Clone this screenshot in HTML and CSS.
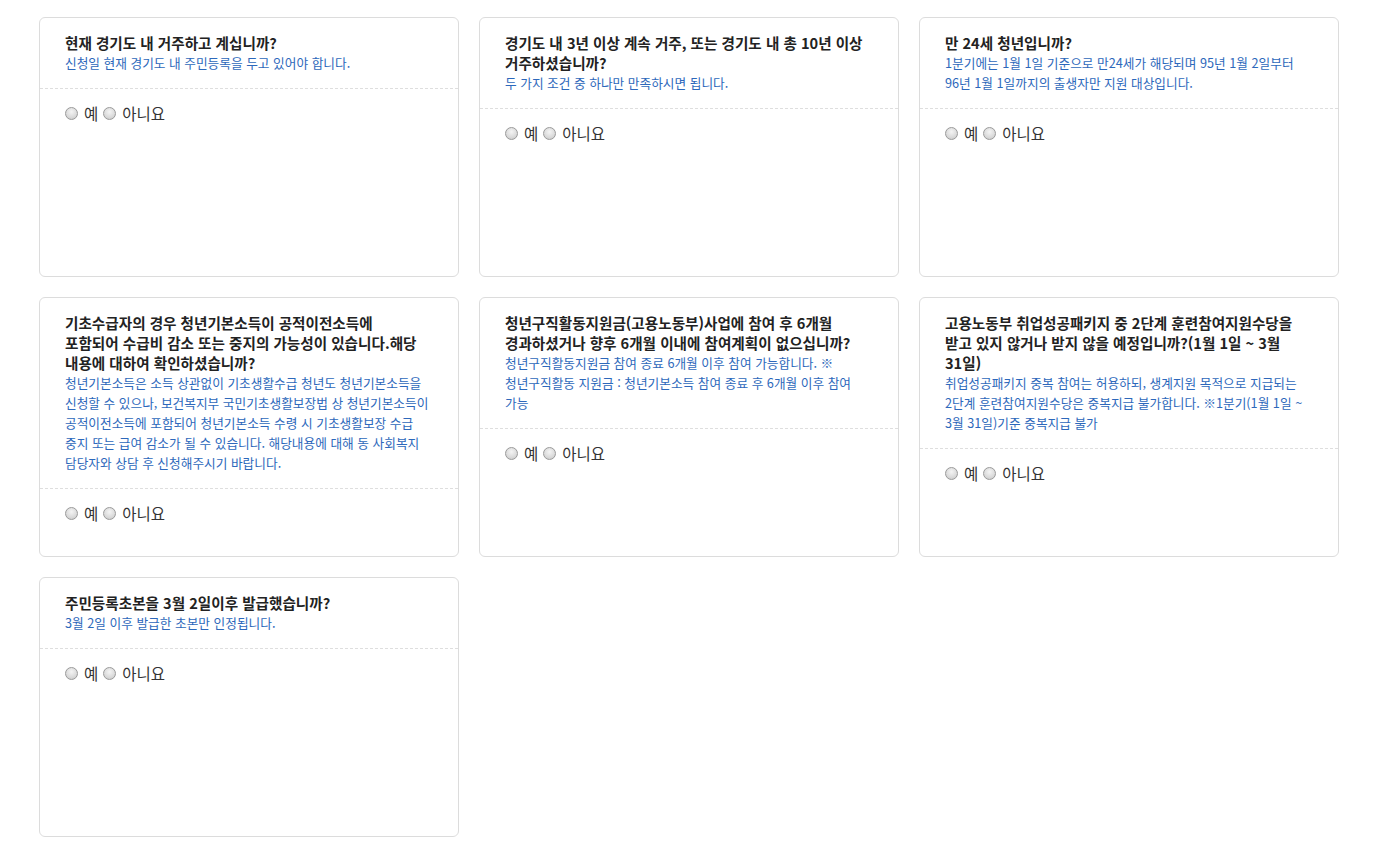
FILE: index.html
```html
<!DOCTYPE html>
<html lang="ko">
<head>
<meta charset="utf-8">
<link rel="stylesheet" href="styles.css">
</head>
<body>
<div class="grid">
  <div class="card">
    <div class="head">
      <div class="q">현재 경기도 내 거주하고 계십니까?</div>
      <div class="desc">신청일 현재 경기도 내 주민등록을 두고 있어야 합니다.</div>
    </div>
    <div class="opts"><label><input type="radio" name="q1"> 예</label><label><input type="radio" name="q1"> 아니요</label></div>
  </div>
  <div class="card">
    <div class="head">
      <div class="q">경기도 내 3년 이상 계속 거주, 또는 경기도 내 총 10년 이상 거주하셨습니까?</div>
      <div class="desc">두 가지 조건 중 하나만 만족하시면 됩니다.</div>
    </div>
    <div class="opts"><label><input type="radio" name="q2"> 예</label><label><input type="radio" name="q2"> 아니요</label></div>
  </div>
  <div class="card">
    <div class="head">
      <div class="q">만 24세 청년입니까?</div>
      <div class="desc">1분기에는 1월 1일 기준으로 만24세가 해당되며 95년 1월 2일부터 96년 1월 1일까지의 출생자만 지원 대상입니다.</div>
    </div>
    <div class="opts"><label><input type="radio" name="q3"> 예</label><label><input type="radio" name="q3"> 아니요</label></div>
  </div>
  <div class="card">
    <div class="head">
      <div class="q">기초수급자의 경우 청년기본소득이 공적이전소득에 포함되어 수급비 감소 또는 중지의 가능성이 있습니다.해당 내용에 대하여 확인하셨습니까?</div>
      <div class="desc">청년기본소득은 소득 상관없이 기초생활수급 청년도 청년기본소득을 신청할 수 있으나, 보건복지부 국민기초생활보장법 상 청년기본소득이 공적이전소득에 포함되어 청년기본소득 수령 시 기초생활보장 수급 중지 또는 급여 감소가 될 수 있습니다. 해당내용에 대해 동 사회복지 담당자와 상담 후 신청해주시기 바랍니다.</div>
    </div>
    <div class="opts"><label><input type="radio" name="q4"> 예</label><label><input type="radio" name="q4"> 아니요</label></div>
  </div>
  <div class="card">
    <div class="head">
      <div class="q">청년구직활동지원금(고용노동부)사업에 참여 후 6개월 경과하셨거나 향후 6개월 이내에 참여계획이 없으십니까?</div>
      <div class="desc">청년구직활동지원금 참여 종료 6개월 이후 참여 가능합니다. ※ 청년구직활동 지원금 : 청년기본소득 참여 종료 후 6개월 이후 참여 가능</div>
    </div>
    <div class="opts"><label><input type="radio" name="q5"> 예</label><label><input type="radio" name="q5"> 아니요</label></div>
  </div>
  <div class="card">
    <div class="head">
      <div class="q">고용노동부 취업성공패키지 중 2단계 훈련참여지원수당을 받고 있지 않거나 받지 않을 예정입니까?(1월 1일 ~ 3월 31일)</div>
      <div class="desc">취업성공패키지 중복 참여는 허용하되, 생계지원 목적으로 지급되는 2단계 훈련참여지원수당은 중복지급 불가합니다. ※1분기(1월 1일 ~ 3월 31일)기준 중복지급 불가</div>
    </div>
    <div class="opts"><label><input type="radio" name="q6"> 예</label><label><input type="radio" name="q6"> 아니요</label></div>
  </div>
  <div class="card">
    <div class="head">
      <div class="q">주민등록초본을 3월 2일이후 발급했습니까?</div>
      <div class="desc">3월 2일 이후 발급한 초본만 인정됩니다.</div>
    </div>
    <div class="opts"><label><input type="radio" name="q7"> 예</label><label><input type="radio" name="q7"> 아니요</label></div>
  </div>
</div>
</body>
</html>
```
FILE: styles.css
```css
html, body {
  margin: 0;
  padding: 0;
  background: #fff;
}
body {
  font-family: "Noto Sans CJK KR", "Noto Sans", sans-serif;
  color: #333;
}
.grid {
  display: grid;
  grid-template-columns: repeat(3, 420px);
  grid-auto-rows: 260px;
  gap: 20px;
  padding: 17px 0 0 39px;
}
.card {
  border: 1px solid #dcdcdc;
  border-radius: 6px;
  box-sizing: border-box;
  background: #fff;
}
.head {
  padding: 15px 25px 15px 25px;
  border-bottom: 1px dashed #dedede;
  word-break: keep-all;
}
.q {
  font-size: 14.6px;
  font-weight: bold;
  line-height: 20px;
  color: #222;
  padding-right: 8px;
}
.desc {
  font-size: 12.7px;
  line-height: 20px;
  color: #2d68bb;
}
.opts {
  padding: 13px 25px;
  font-size: 15.5px;
  line-height: 22px;
  color: #333;
  display: flex;
  gap: 5px;
}
.opts label {
  display: inline-flex;
  align-items: center;
  gap: 6px;
}
.opts input {
  appearance: none;
  -webkit-appearance: none;
  margin: 0;
  width: 13px;
  height: 13px;
  border-radius: 50%;
  border: 1px solid #9a9a9a;
  background: radial-gradient(circle at 50% 35%, #f4f4f4 0%, #dadada 60%, #c4c4c4 100%);
  box-sizing: border-box;
}
```
